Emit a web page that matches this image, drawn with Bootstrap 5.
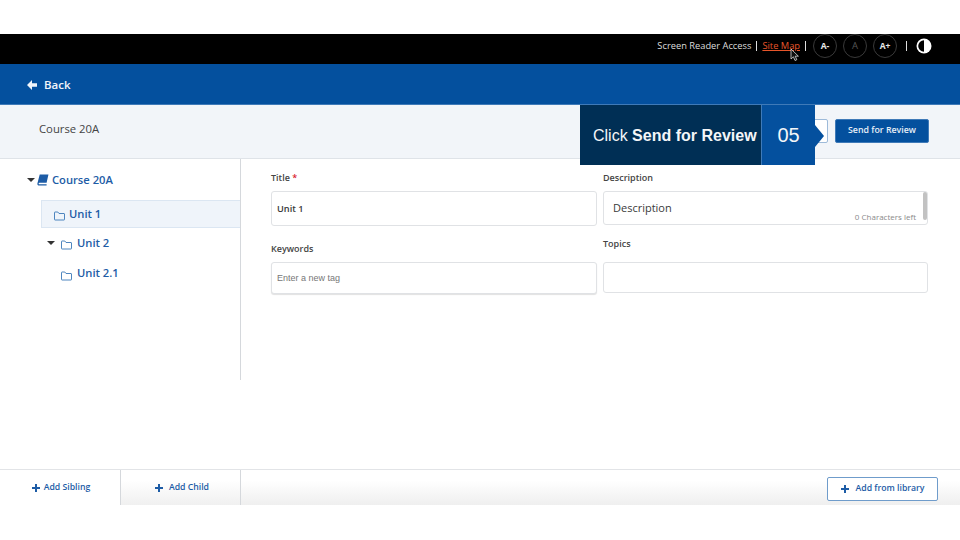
<!DOCTYPE html>
<html lang="en">
<head>
  <meta charset="UTF-8" />
  <meta name="viewport" content="width=device-width, initial-scale=1" />
  <title>Course 20A - Send for Review</title>
  <link href="https://cdn.jsdelivr.net/npm/bootstrap@5.3.3/dist/css/bootstrap.min.css" rel="stylesheet" />
  <style>
    html, body { height: 540px; overflow: hidden; }
    body { background: #fff; font-family: "Open Sans", "Noto Sans", sans-serif; color: #3c3c3c; }

    .app-frame { margin-top: 34px; height: 471px; position: relative; }

    .access-bar { height: 30px; background: #000; color: #dcdcdc; font-size: 9.300px; padding: 0 28px 6px 0; }
    .access-link { color: #e8562a; text-decoration: underline; }
    .access-sep { width: 1px; height: 10px; background: #ddd; margin: 0 5px; }
    .sep-mid { margin: 0 7px 0 5px; }
    .sep-last { margin: 0 9px; }
    .size-btn { width: 24px; height: 24px; border: 1px solid #3a3a3a; border-radius: 50%; color: #e8e8e8; font-size: 8.500px; font-weight: 700; }
    .size-next { margin-left: 6px; }
    .size-btn-off { color: #555; font-weight: 400; font-size: 9.500px; }
    .contrast-icon { width: 16px; height: 16px; }

    .back-bar { height: 41px; background: #04509e; border-bottom: 1px solid #3f7ab8; color: #f1f5fa; font-size: 11.500px; font-weight: 600; padding: 2px 0 0 27px; gap: 7px; }

    .course-bar { height: 54px; background: #f2f5f9; border-bottom: 1px solid #dfe3e8; padding: 0 31px 2px 39px; font-size: 11.300px; color: #444; }
    .course-name { margin-bottom: 2px; }
    .ghost-btn { width: 30px; height: 24px; margin-right: 7px; background: #fff; border: 1px solid #9dbad9; border-radius: 2px; }
    .review-btn { height: 24px; width: 94px; padding: 0; background: #04509e; border: 1px solid #3f7ab8; border-radius: 2px; color: #e6eef7; font-size: 8.800px; font-weight: 600; }

    .callout { position: absolute; left: 580px; top: 71px; height: 60px; color: #f4f6f8; font-family: "Liberation Sans", Arial, sans-serif; }
    .callout-text { width: 181px; background: #002f55; font-size: 16px; padding: 2px 0 0 13px; white-space: nowrap; }
    .callout-num { width: 54px; background: #04509e; border-left: 1px solid #3f7ab8; font-size: 20px; position: relative; }
    .callout-num::after { content: ""; position: absolute; left: 53px; top: 20px; border-left: 9px solid #04509e; border-top: 11px solid transparent; border-bottom: 11px solid transparent; }

    .work-area { height: 221px; }
    .tree-pane { width: 241px; border-right: 1px solid #d5d8dc; padding-top: 12px; color: #1d5ca6; font-size: 11.200px; font-weight: 600; }
    .tree-item { height: 29.500px; gap: 4px; white-space: nowrap; }
    .tree-root { height: 18px; padding-left: 27px; margin-bottom: 11px; gap: 2px; }
    .tree-selected { height: 28px; margin-left: 41px; padding-left: 12px; background: #eff4fa; border: 1px solid #dbe6f2; border-right: 0; }
    .tree-child { padding: 1px 0 0 47px; gap: 5px; }
    .tree-leaf { height: 30px; padding: 2px 0 0 61px; gap: 5px; }
    .caret-down { width: 0; height: 0; border-top: 4px solid #333; border-left: 4px solid transparent; border-right: 4px solid transparent; }
    .tree-child .caret-down { margin-right: 1px; }
    .folder-icon { width: 11px; height: 10px; margin-top: 4px; flex: none; }
    .book-icon { width: 12px; height: 12px; margin-right: 1px; flex: none; }

    .form-pane { padding: 12px 0 0 30px; gap: 6px; }
    .form-side { width: 326px; }
    .form-side-right { width: 325px; }
    .field-label { font-size: 9px; font-weight: 600; color: #444; line-height: 13px; margin: 0 0 7px; }
    .req-mark { color: #d9232e; }
    .field-box { border: 1px solid #e0e2e5; border-radius: 3px; font-size: 9.200px; font-weight: 600; color: #3a3a3a; padding-left: 5px; background: #fff; }
    .title-box { height: 35px; }
    .desc-box { height: 34px; position: relative; padding-left: 9px; font-size: 11px; font-weight: 400; }
    .tag-box { height: 32px; padding: 1px 0 0 5px; font-size: 9px; font-weight: 400; color: #777; box-shadow: 0 1px 1px rgba(0,0,0,.12); font-family: "Liberation Sans", Arial, sans-serif; }
    .topic-box { height: 31px; }
    .chars-left { position: absolute; right: 11px; bottom: 1px; font-size: 8px; color: #8a8a8a; }
    .desc-scroll { position: absolute; right: 0; top: 0; width: 4px; height: 28px; background: #c2c2c2; border-radius: 2px; }
    .keywords-label { margin-top: 16px; }
    .topics-label { margin-top: 12px; margin-bottom: 12px; }

    .foot-bar { position: absolute; left: 0; right: 0; bottom: 0; height: 36px; border-top: 1px solid #e2e4e7; background: linear-gradient(#fff 30%, #efefef); color: #1d5ca6; font-size: 8.700px; font-weight: 600; }
    .foot-btn { width: 121px; height: 100%; border-right: 1px solid #d5d8dc; gap: 4px; padding: 1px 0 0 2px; white-space: nowrap; background: #fff; }
    .foot-btn-two { width: 120px; gap: 6px; padding: 1px 0 0 3px; background: linear-gradient(#fff 30%, #f0f0f0); }
    .library-btn { width: 111px; height: 24px; margin: 2px 22px 0 auto; padding: 0; gap: 7px; background: #fff; border: 1px solid #6f9ccb; border-radius: 2px; color: #1d5ca6; font-size: 8.700px; font-weight: 600; }
    .plus-sign { width: 8px; height: 8px; flex: none; }

    .pointer-icon { position: absolute; left: 790px; top: 14px; width: 10px; height: 14px; }
  </style>
</head>
<body>

<div class="app-frame">
  <!-- top access bar -->
  <div class="access-bar d-flex align-items-center justify-content-end">
    <span>Screen Reader Access</span>
    <span class="access-sep"></span>
    <span class="access-link">Site Map</span>
    <span class="access-sep sep-mid"></span>
    <span class="size-btn d-flex align-items-center justify-content-center">A-</span>
    <span class="size-btn size-btn-off size-next d-flex align-items-center justify-content-center">A</span>
    <span class="size-btn size-next d-flex align-items-center justify-content-center">A+</span>
    <span class="access-sep sep-last"></span>
    <svg class="contrast-icon" viewBox="0 0 16 16">
      <circle cx="8" cy="8" r="7.500" fill="#fff"/>
      <path d="M8 2.200A5.800 5.800 0 0 0 8 13.800Z" fill="#000"/>
    </svg>
  </div>

  <!-- back -->
  <div class="back-bar d-flex align-items-center">
    <svg width="10" height="10" viewBox="0 0 10 10"><path d="M5 0 0 5 5 10V6.800H10V3.200H5Z" fill="#f1f5fa"/></svg>
    <span>Back</span>
  </div>

  <!-- course title -->
  <div class="course-bar d-flex align-items-center">
    <span class="course-name me-auto">Course 20A</span>
    <button class="ghost-btn"></button>
    <button class="btn review-btn">Send for Review</button>
  </div>

  <div class="work-area d-flex">
    <div class="tree-pane flex-shrink-0">
      <div class="tree-item tree-root d-flex align-items-center">
        <span class="caret-down"></span>
        <svg class="book-icon" viewBox="0 0 11 11"><path d="M2.500 .5H10.500L8.800 8H2.200C1.300 8 1.300 9.500 2.200 9.500H8.800V10.500H1.500C.5 10.500 .2 9.500 .4 8.500Z" fill="#1d5ca6"/></svg>
        <span>Course 20A</span>
      </div>
      <div class="tree-item tree-selected d-flex align-items-center">
        <svg class="folder-icon" viewBox="0 0 11 10"><path d="M.5 8V1.500Q.5 1 1 1H3.800L5 2.500H10Q10.500 2.500 10.500 3V8.500Q10.500 9 10 9H1Q.5 9 .5 8.500Z" fill="none" stroke="#3b78b8" stroke-width=".9"/></svg>
        <span>Unit 1</span>
      </div>
      <div class="tree-item tree-child d-flex align-items-center">
        <span class="caret-down"></span>
        <svg class="folder-icon" viewBox="0 0 11 10"><path d="M.5 8V1.500Q.5 1 1 1H3.800L5 2.500H10Q10.500 2.500 10.500 3V8.500Q10.500 9 10 9H1Q.5 9 .5 8.500Z" fill="none" stroke="#3b78b8" stroke-width=".9"/></svg>
        <span>Unit 2</span>
      </div>
      <div class="tree-item tree-leaf d-flex align-items-center">
        <svg class="folder-icon" viewBox="0 0 11 10"><path d="M.5 8V1.500Q.5 1 1 1H3.800L5 2.500H10Q10.500 2.500 10.500 3V8.500Q10.500 9 10 9H1Q.5 9 .5 8.500Z" fill="none" stroke="#3b78b8" stroke-width=".9"/></svg>
        <span>Unit 2.1</span>
      </div>
    </div>

    <div class="form-pane d-flex flex-grow-1">
      <div class="form-side">
        <p class="field-label">Title <span class="req-mark">*</span></p>
        <div class="field-box title-box d-flex align-items-center">Unit 1</div>
        <p class="field-label keywords-label">Keywords</p>
        <div class="field-box tag-box d-flex align-items-center">Enter a new tag</div>
      </div>
      <div class="form-side-right">
        <p class="field-label">Description</p>
        <div class="field-box desc-box d-flex align-items-center">
          Description
          <span class="chars-left">0 Characters left</span>
          <span class="desc-scroll"></span>
        </div>
        <p class="field-label topics-label">Topics</p>
        <div class="field-box topic-box"></div>
      </div>
    </div>
  </div>

  <!-- footer actions -->
  <div class="foot-bar d-flex align-items-center">
    <div class="foot-btn d-flex align-items-center justify-content-center">
      <svg class="plus-sign" viewBox="0 0 8 8"><path d="M3 0H5V3H8V5H5V8H3V5H0V3H3Z" fill="#1d5ca6"/></svg>
      <span>Add Sibling</span>
    </div>
    <div class="foot-btn foot-btn-two d-flex align-items-center justify-content-center">
      <svg class="plus-sign" viewBox="0 0 8 8"><path d="M3 0H5V3H8V5H5V8H3V5H0V3H3Z" fill="#1d5ca6"/></svg>
      <span>Add Child</span>
    </div>
    <button class="btn library-btn d-flex align-items-center justify-content-center">
      <svg class="plus-sign" viewBox="0 0 8 8"><path d="M3 0H5V3H8V5H5V8H3V5H0V3H3Z" fill="#1d5ca6"/></svg>
      <span>Add from library</span>
    </button>
  </div>

  <!-- tutorial callout -->
  <div class="callout d-flex">
    <div class="callout-text d-flex align-items-center"><span>Click <b>Send for Review</b></span></div>
    <div class="callout-num d-flex align-items-center justify-content-center">05</div>
  </div>

  <svg class="pointer-icon" viewBox="0 0 10 14"><path d="M1 1V11L3.400 8.800L5 12.500L6.800 11.700L5.200 8.200H8.400Z" fill="#111" stroke="#ddd" stroke-width=".8"/></svg>
</div>

<script src="https://cdn.jsdelivr.net/npm/bootstrap@5.3.3/dist/js/bootstrap.bundle.min.js"></script>
</body>
</html>
